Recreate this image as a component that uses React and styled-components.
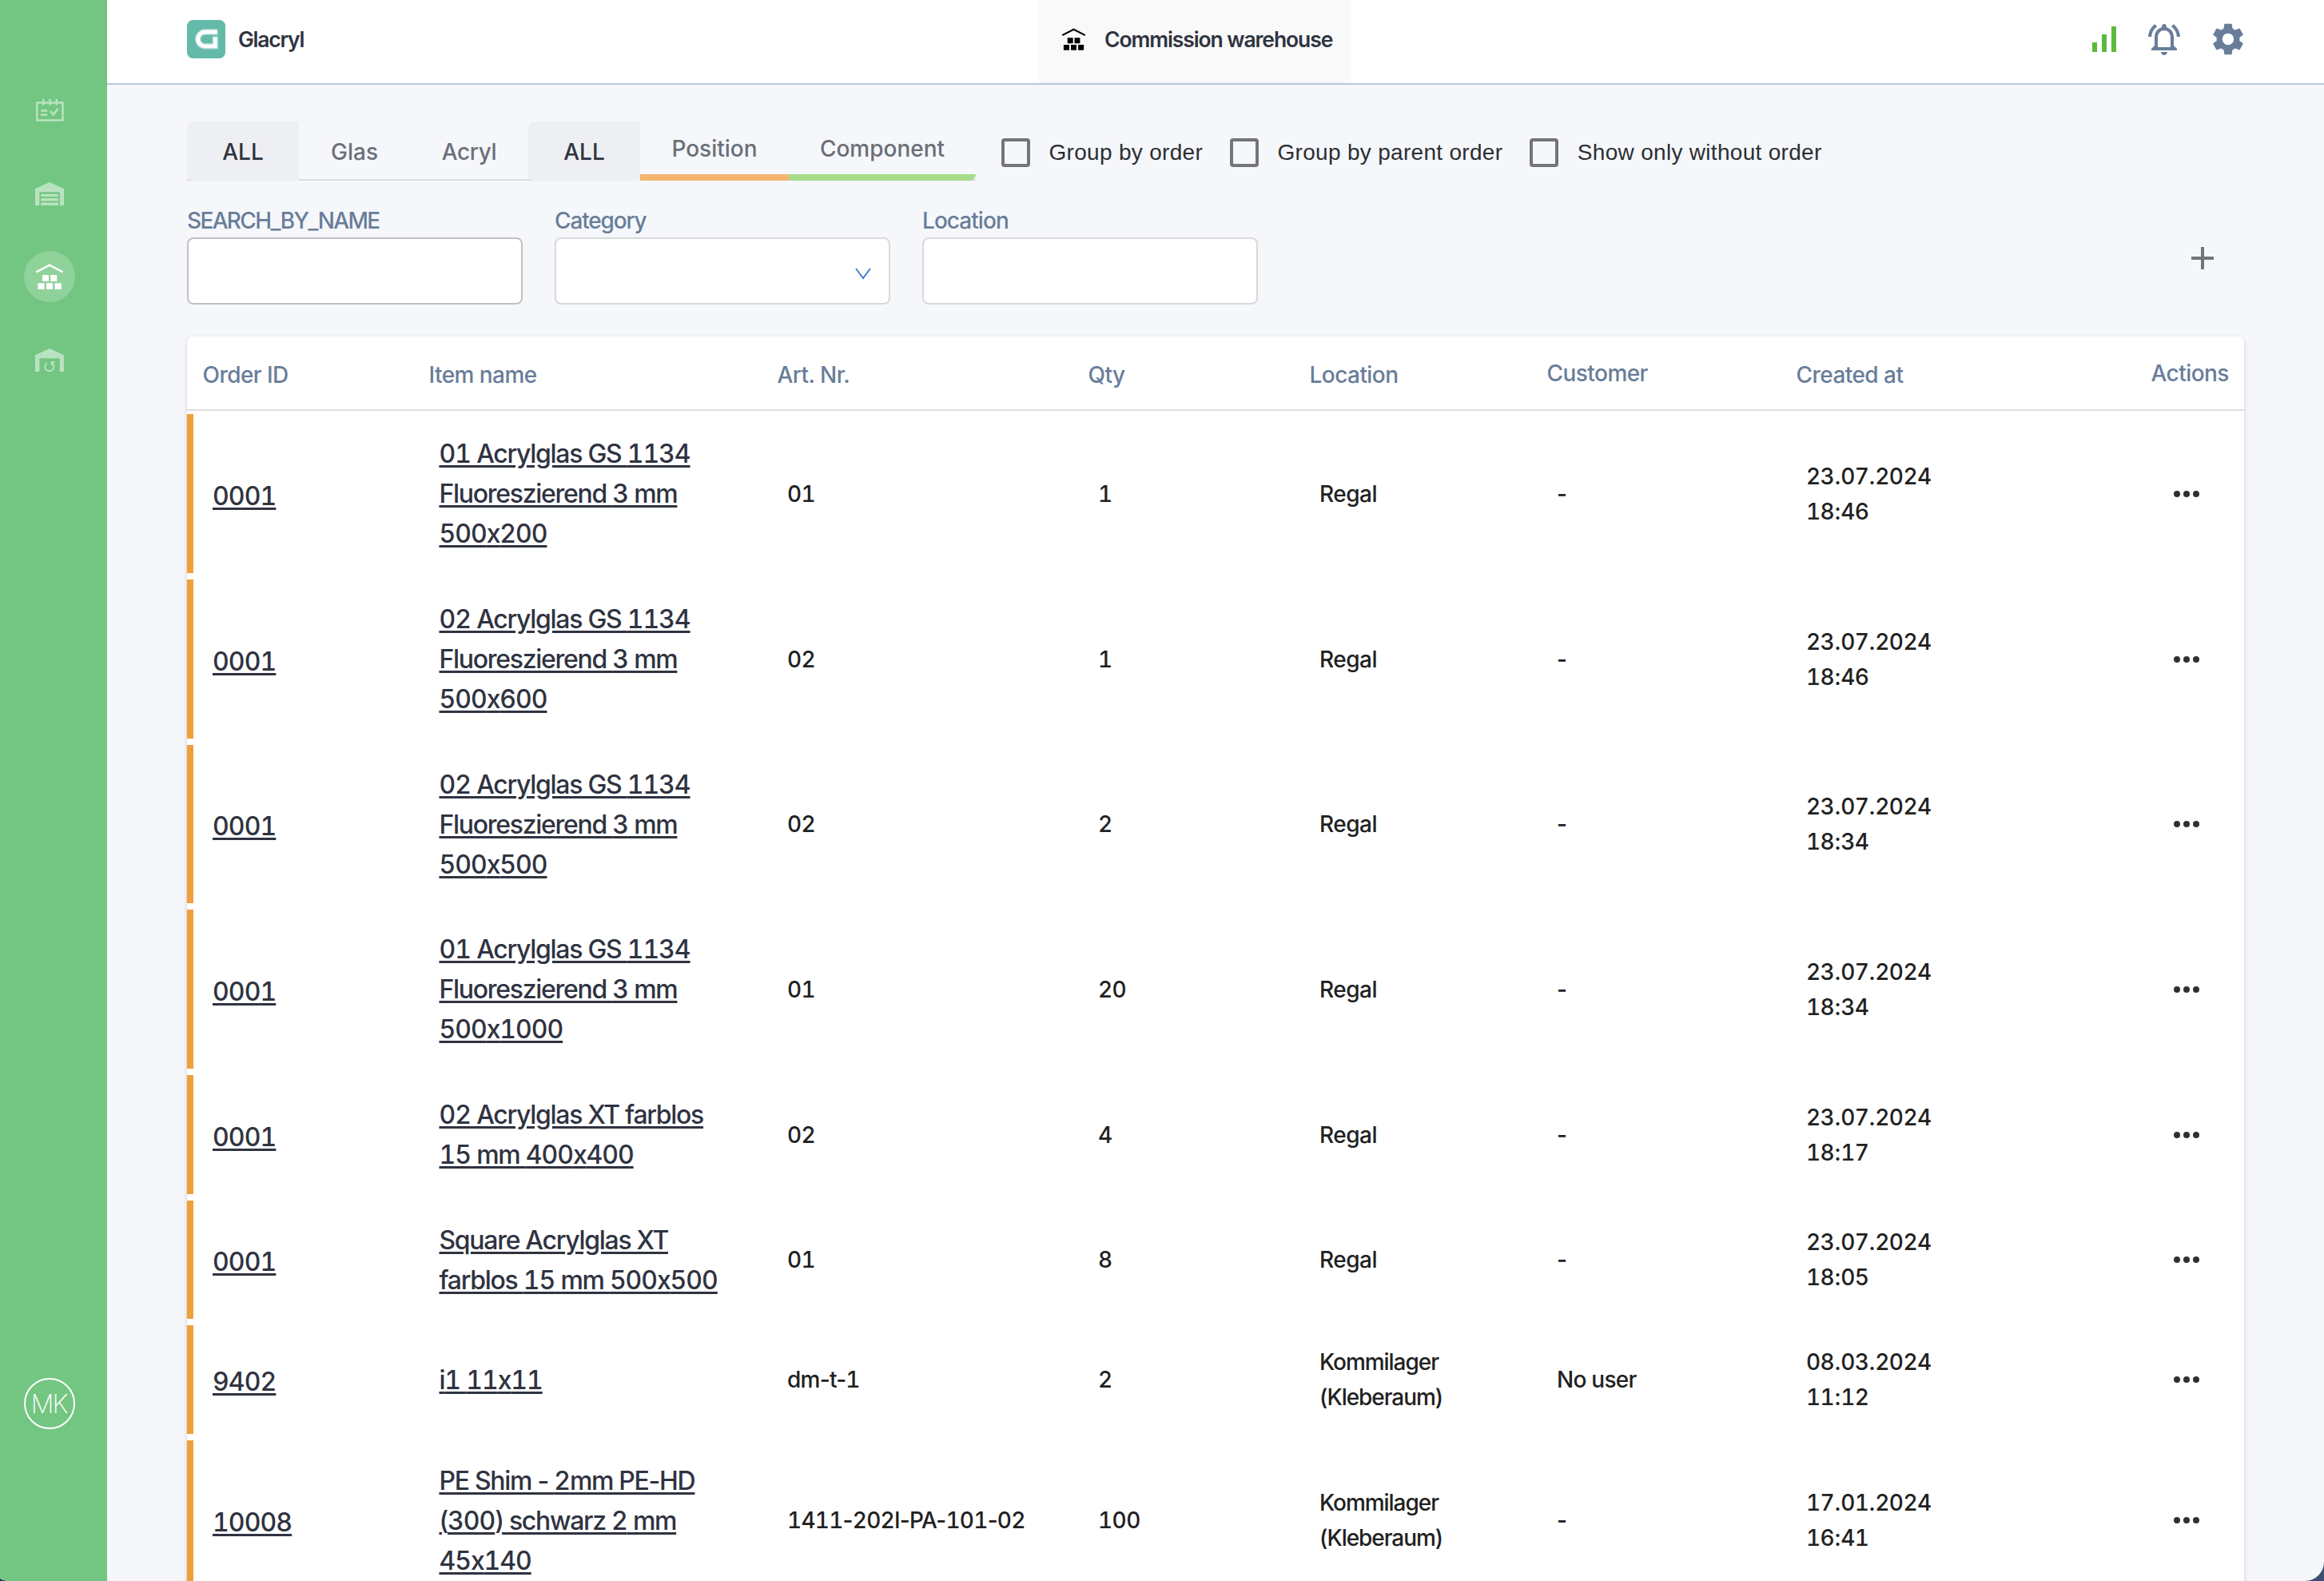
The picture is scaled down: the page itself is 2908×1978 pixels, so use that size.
import React from "react";
import styled, { createGlobalStyle, css } from "styled-components";
import { MdSignalCellularAlt, MdOutlineNotificationsActive, MdSettings } from "react-icons/md";

const GlobalStyle = createGlobalStyle`
  *, *::before, *::after { box-sizing: border-box; }
  body {
    margin: 0;
    background: linear-gradient(90deg, #2a2a5c 0%, #2a2a5c 50%, #3d4f75 50%, #3d4f75 100%);
    font-family: Inter, "Liberation Sans", sans-serif;
    font-feature-settings: "calt" 0;
    overflow: hidden;
  }
`;

const Shell = styled.div`
  display: flex;
  height: 1978px;
  overflow: hidden;
  background: #f5f7fb;
  border-radius: 0 0 24px 13px / 0 0 24px 4px;
`;

const Sidebar = styled.nav`
  flex: none;
  width: 134px;
  padding: 106px 0 190px 30px;
  display: flex;
  flex-direction: column;
  gap: 40px;
  background: #73c681;
`;

const NavItem = styled.a`
  width: 64px;
  height: 64px;
  display: flex;
  align-items: center;
  justify-content: center;
  border-radius: 50%;
  color: ${(p) => (p.$active ? "#fff" : "#b9e3c0")};
  background: ${(p) => (p.$active ? "#8fd29a" : "transparent")};
  svg { display: block; }
`;

const Avatar = styled.div`
  margin-top: auto;
  width: 64px;
  height: 64px;
  display: flex;
  align-items: center;
  justify-content: center;
  border: 2px solid #fff;
  border-radius: 50%;
  color: #fff;
  font-size: 32px;
  font-weight: 250;
  letter-spacing: -2px;
  text-indent: -2px;
`;

const Page = styled.div`
  flex: 1;
  min-width: 0;
  display: flex;
  flex-direction: column;
`;

const TopBar = styled.header`
  flex: none;
  height: 106px;
  display: grid;
  grid-template-columns: 1165px 391px 1fr;
  background: #fff;
  border-bottom: 2px solid #b7c8da;
  color: #2f3441;
  font-size: 26.5px;
  font-weight: 600;
`;

const Brand = styled.div`
  display: flex;
  gap: 16px;
  align-items: center;
  align-self: start;
  height: 48px;
  margin: 25px 0 0 100px;
  letter-spacing: -1.25px;
`;

const ModuleTab = styled.div`
  display: flex;
  align-items: center;
  gap: 23px;
  padding: 0 0 6px 29px;
  background: #f9f9f9;
  color: #2f3441;
  letter-spacing: -1.1px;
  white-space: nowrap;
  svg { color: #000; }
`;

const Tools = styled.div`
  display: flex;
  justify-content: flex-end;
  align-items: flex-start;
  padding: 25px 96px 0 0;
  color: #687d99;
`;

const Tool = styled.button`
  width: 48px;
  height: 48px;
  padding: 0;
  border: 0;
  background: none;
  color: ${(p) => p.$tone || "inherit"};
  margin-left: ${(p) => p.$gap || 0}px;
  svg { display: block; width: 48px; height: 48px; }
`;

const Content = styled.main`
  padding: 46px 100px 0;
`;

const FilterBar = styled.div`
  display: flex;
  height: 74px;
`;

const TabGroup = styled.div`
  display: flex;
  height: 74px;
  background: linear-gradient(#dcdde1, #dcdde1) bottom / 100% 2px no-repeat;
`;

const Tab = styled.button`
  width: ${(p) => p.$width}px;
  height: 74px;
  padding: 1px 0 0;
  border: 0;
  background: none;
  font: 500 28px Inter, sans-serif;
  letter-spacing: ${(p) => p.$tracking || 0}px;
  color: #6b6f78;
  ${(p) => p.$selected && css`
    background: #eeeff3;
    color: #2f3441;
    border-radius: 8px 0 0 8px;
  `}
  ${(p) => p.$bar && css`
    border-bottom: 8px solid ${p.$bar};
  `}
  ${(p) => p.$last && css`border-bottom-right-radius: 8px;`}
`;

const Checks = styled.div`
  display: flex;
  align-items: center;
  gap: 34px;
  padding: 4px 0 0 32px;
`;

const CheckLabel = styled.label`
  display: flex;
  align-items: center;
  gap: 23.5px;
  font: 400 28px "Liberation Sans", Arial, sans-serif;
  letter-spacing: 0.3px;
  color: #2c2e31;
  white-space: nowrap;
`;

const CheckBox = styled.span`
  width: 36px;
  height: 36px;
  border: 4px solid #747578;
  border-radius: 4px;
`;

const SearchBar = styled.div`
  display: flex;
  gap: 40px;
  margin-top: 26px;
`;

const Field = styled.div`
  width: 420px;
`;

const FieldLabel = styled.div`
  height: 45px;
  padding-top: 1px;
  line-height: 46px;
  font-size: 28px;
  font-weight: 500;
  color: #687d99;
  letter-spacing: ${(p) => p.$tracking}px;
`;

const FieldBox = styled.div`
  height: 84px;
  display: flex;
  align-items: center;
  justify-content: flex-end;
  padding: 6px 22px 0;
  background: #fff;
  border: 2px solid ${(p) => (p.$strong ? "#c1c1c1" : "#d8d9db")};
  border-radius: 8px;
`;

const AddButton = styled.button`
  align-self: flex-end;
  margin: 0 38px 44px auto;
  width: 28px;
  height: 28px;
  padding: 0;
  border: 0;
  background: none;
  svg { display: block; }
`;

const Table = styled.section`
  margin-top: 40px;
  height: 1700px;
  background: #fff;
  border-radius: 8px 8px 0 0;
  box-shadow: 0 4px 2px -2px rgba(0, 0, 0, 0.2), 0 2px 2px rgba(0, 0, 0, 0.14), 0 2px 6px rgba(0, 0, 0, 0.12);
`;

const columns = css`
  display: grid;
  grid-template-columns: 290px 436px 389px 277px 297px 312px 429px 144px;
  align-items: center;
`;

const HeadRow = styled.div`
  ${columns}
  height: 93px;
  border-bottom: 2px solid #dfdfdf;
  margin-bottom: 4px;
`;

const HeadCell = styled.div`
  padding: ${(p) => (p.$raised ? 1 : 4)}px 0 0 ${(p) => p.$indent ?? 12.5}px;
  font-size: 28px;
  font-weight: 500;
  letter-spacing: -0.55px;
  color: #687d99;
`;

const Row = styled.div`
  ${columns}
  height: ${(p) => p.$height}px;
  margin-bottom: 8px;
  background: linear-gradient(#f19f3a, #f19f3a) left / 8px 100% no-repeat;
`;

const Digits = styled.span`font-variant-numeric: tabular-nums;`;

const linkText = css`
  font-size: 32px;
  font-weight: 500;
  line-height: 50px;
  color: #2f3341;
  text-decoration: underline;
  text-decoration-thickness: 3px;
  text-underline-offset: 3px;
  white-space: nowrap;
`;

const OrderCell = styled.div`padding: 6px 0 0 32px;`;
const ItemCell = styled.div`padding: 1px 0 0 25.5px;`;

const OrderLink = styled.a`
  ${linkText}
  letter-spacing: -0.9px;
`;

const ItemLink = styled.a`
  ${linkText}
  display: block;
  width: max-content;
  letter-spacing: -1.3px;
  ${Digits} { letter-spacing: -1px; }
`;

const Cell = styled.div`
  padding-left: 25px;
  font-size: 28px;
  font-weight: 500;
  line-height: 44px;
  letter-spacing: ${(p) => p.$tracking ?? -0.55}px;
  color: #212121;
`;

const MoreButton = styled.button`
  display: flex;
  justify-content: center;
  gap: 4px;
  padding: 0;
  border: 0;
  background: none;
`;

const Dot = styled.i`
  width: 8px;
  height: 8px;
  border-radius: 50%;
  background: #303030;
`;

const Numeric = ({ children }) =>
  children.split(/(\d+)/).map((part, i) => (i % 2 ? <Digits key={i}>{part}</Digits> : part));

const WarehouseIcon = ({ width = 36, height = 32 }) => (
  <svg width={width} height={height} viewBox="0 0 36 32" fill="currentColor">
    <path d="M1.4 10.3 18 1.7l16.6 8.6" fill="none" stroke="currentColor" strokeWidth="2.5" />
    <path d="M9 14h8v8H9zM19.2 14h8v8h-8zM3.4 24.2h8.2v7.8H3.4zM14 24.2h8v7.8h-8zM24.5 24.2h8.2v7.8h-8.2z" />
  </svg>
);

const CalendarIcon = () => (
  <svg width="36" height="28" viewBox="0 0 36 28" fill="none" stroke="currentColor" strokeWidth="2.5">
    <path d="M2.3 4.6h32.2v22H2.3z" strokeLinejoin="round" />
    <path d="M10.2 0v7.6M18.5 0v7.6M26.8 0v7.6" />
    <path d="M7.2 14.4h8M7.2 19.8h8M19 15l3.6 4.6 6-7.9" />
  </svg>
);

const GaragePath = "M0 29V8.3L18 0l18 8.3V29h-5.2V13.4q0-1.2-1.2-1.2H6.6q-1.2 0-1.2 1.2V29z";

const GarageIcon = () => (
  <svg width="36" height="29" viewBox="0 0 36 29" fill="currentColor">
    <path d={GaragePath} />
    <path d="M7.2 14.8h21.7v3.2H7.2zM7.2 20h21.7v3.6H7.2zM7.2 25.6h21.7V29H7.2z" />
  </svg>
);

const GarageReturnIcon = () => (
  <svg width="36" height="29" viewBox="0 0 36 29" fill="currentColor">
    <path d={GaragePath} />
    <path d="M14.8 18A5.6 5.6 0 1 0 21.6 18.4" fill="none" stroke="currentColor" strokeWidth="1.9" />
    <path d="M19.6 16.3h5.2v1.8h-2.2l1 2.6-1.7.8-2.3-1.3z" />
  </svg>
);

const BrandLogo = () => (
  <svg width="48" height="48" viewBox="0 0 48 48" fill="none">
    <rect width="48" height="48" rx="7.5" fill="#63baa8" />
    <path d="M38.6 15H22.6a8.9 8.9 0 0 0 0 17.8H35.4V20.4" stroke="#a9dacf" strokeWidth="7.4" />
    <path d="M37.6 15H22.6a8.9 8.9 0 0 0 0 17.8H35.2V21.6" stroke="#fff" strokeWidth="4.8" />
  </svg>
);

const ROWS = [
  [199, "0001", ["01 Acrylglas GS 1134", "Fluoreszierend 3 mm", "500x200"], "01", "1", ["Regal"], "-", ["23.07.2024", "18:46"]],
  [199, "0001", ["02 Acrylglas GS 1134", "Fluoreszierend 3 mm", "500x600"], "02", "1", ["Regal"], "-", ["23.07.2024", "18:46"]],
  [198, "0001", ["02 Acrylglas GS 1134", "Fluoreszierend 3 mm", "500x500"], "02", "2", ["Regal"], "-", ["23.07.2024", "18:34"]],
  [199, "0001", ["01 Acrylglas GS 1134", "Fluoreszierend 3 mm", "500x1000"], "01", "20", ["Regal"], "-", ["23.07.2024", "18:34"]],
  [149, "0001", ["02 Acrylglas XT farblos", "15 mm 400x400"], "02", "4", ["Regal"], "-", ["23.07.2024", "18:17"]],
  [148, "0001", ["Square Acrylglas XT", "farblos 15 mm 500x500"], "01", "8", ["Regal"], "-", ["23.07.2024", "18:05"]],
  [136, "9402", ["i1 11x11"], "dm-t-1", "2", ["Kommilager", "(Kleberaum)"], "No user", ["08.03.2024", "11:12"]],
  [200, "10008", ["PE Shim - 2mm PE-HD", "(300) schwarz 2 mm", "45x140"], "1411-202I-PA-101-02", "100", ["Kommilager", "(Kleberaum)"], "-", ["17.01.2024", "16:41"]],
];

const Lines = ({ items }) => items.map((line) => <div key={line}><Numeric>{line}</Numeric></div>);

function OrderRow({ row }) {
  const [height, order, item, art, qty, location, customer, created] = row;
  return (
    <Row $height={height}>
      <OrderCell><OrderLink><Numeric>{order}</Numeric></OrderLink></OrderCell>
      <ItemCell>
        {item.map((line) => <ItemLink key={line}><Numeric>{line}</Numeric></ItemLink>)}
      </ItemCell>
      <Cell $tracking={-0.75}><Numeric>{art}</Numeric></Cell>
      <Cell><Numeric>{qty}</Numeric></Cell>
      <Cell $tracking={location.length > 1 ? -1.05 : -0.5}><Lines items={location} /></Cell>
      <Cell $tracking={-0.75}>{customer}</Cell>
      <Cell><Lines items={created} /></Cell>
      <MoreButton><Dot /><Dot /><Dot /></MoreButton>
    </Row>
  );
}

export default function App() {
  return (
    <>
      <GlobalStyle />
      <Shell>
        <Sidebar>
          <NavItem><CalendarIcon /></NavItem>
          <NavItem><GarageIcon /></NavItem>
          <NavItem $active><WarehouseIcon /></NavItem>
          <NavItem><GarageReturnIcon /></NavItem>
          <Avatar>MK</Avatar>
        </Sidebar>
        <Page>
          <TopBar>
            <Brand><BrandLogo />Glacryl</Brand>
            <ModuleTab><WarehouseIcon width={31} height={28} />Commission warehouse</ModuleTab>
            <Tools>
              <Tool $tone="#5cb83f"><MdSignalCellularAlt /></Tool>
              <Tool $gap={28}><MdOutlineNotificationsActive /></Tool>
              <Tool $gap={32}><MdSettings /></Tool>
            </Tools>
          </TopBar>
          <Content>
            <FilterBar>
              <TabGroup>
                <Tab $width={140} $selected>ALL</Tab>
                <Tab $width={139}>Glas</Tab>
                <Tab $width={148} $tracking={-0.4}>Acryl</Tab>
              </TabGroup>
              <TabGroup>
                <Tab $width={140} $selected>ALL</Tab>
                <Tab $width={186} $bar="#f3b56f">Position</Tab>
                <Tab $width={234} $bar="#a6dc8b" $last>Component</Tab>
              </TabGroup>
              <Checks>
                <CheckLabel><CheckBox />Group by order</CheckLabel>
                <CheckLabel><CheckBox />Group by parent order</CheckLabel>
                <CheckLabel><CheckBox />Show only without order</CheckLabel>
              </Checks>
            </FilterBar>
            <SearchBar>
              <Field>
                <FieldLabel $tracking={-1.65}>SEARCH_BY_NAME</FieldLabel>
                <FieldBox $strong />
              </Field>
              <Field>
                <FieldLabel $tracking={-1.15}>Category</FieldLabel>
                <FieldBox>
                  <svg width="20" height="15" viewBox="0 0 20 15" fill="none" stroke="#4a7bdc" strokeWidth="2">
                    <path d="M1 1l9 12 9-12" />
                  </svg>
                </FieldBox>
              </Field>
              <Field>
                <FieldLabel $tracking={-0.95}>Location</FieldLabel>
                <FieldBox />
              </Field>
              <AddButton>
                <svg width="28" height="28" viewBox="0 0 28 28" fill="#737477">
                  <path d="M12 0h4v12h12v4H16v12h-4V16H0v-4h12z" />
                </svg>
              </AddButton>
            </SearchBar>
            <Table>
              <HeadRow>
                <HeadCell $indent={19.5}>Order ID</HeadCell>
                <HeadCell>Item name</HeadCell>
                <HeadCell>Art. Nr.</HeadCell>
                <HeadCell>Qty</HeadCell>
                <HeadCell>Location</HeadCell>
                <HeadCell $raised>Customer</HeadCell>
                <HeadCell>Created at</HeadCell>
                <HeadCell $raised $indent={27.5}>Actions</HeadCell>
              </HeadRow>
              {ROWS.map((row, i) => <OrderRow key={i} row={row} />)}
            </Table>
          </Content>
        </Page>
      </Shell>
    </>
  );
}
